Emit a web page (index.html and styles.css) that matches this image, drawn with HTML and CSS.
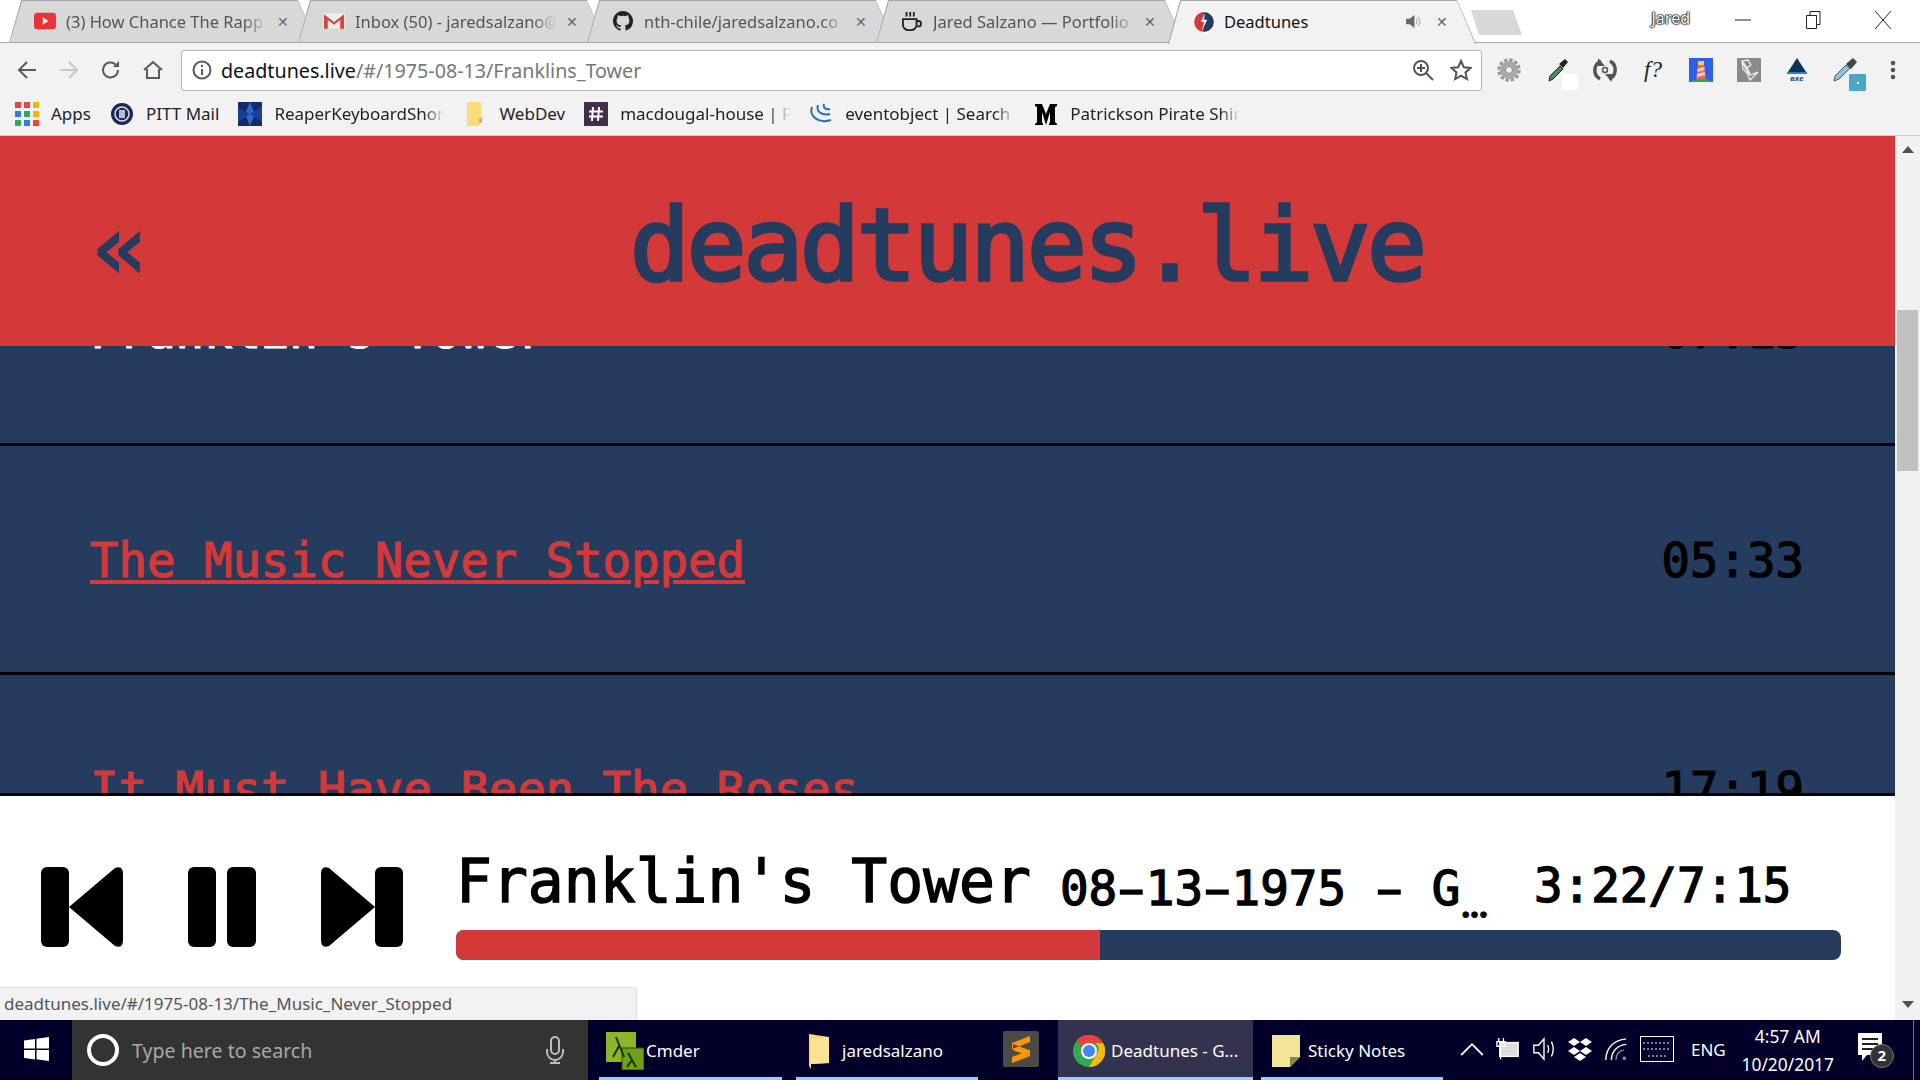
FILE: index.html
```html
<!DOCTYPE html>
<html lang="en">

<head>
    <meta charset="UTF-8" />
    <title>Deadtunes</title>
    <link rel="stylesheet" href="styles.css">
</head>

<body>
    <!-- browser chrome -->
    <div class="tabstrip">
        <div class="tab">
            <svg class="favicon" viewBox="0 0 20 15"><rect width="20" height="15" rx="3" fill="#e8333a"/><path d="M8 4l5 3.500-5 3.500z" fill="#fff"/></svg>
            <span class="tab-title">(3) How Chance The Rapp</span>
            <span class="tab-close">✕</span>
        </div>
        <div class="tab">
            <svg class="favicon" viewBox="0 0 23 16"><rect width="23" height="16" fill="#eee"/><path d="M1 16V1l10.500 8L22 1v15h-4V7l-6.500 5L5 7v9z" fill="#d5473c"/></svg>
            <span class="tab-title">Inbox (50) - jaredsalzano@</span>
            <span class="tab-close">✕</span>
        </div>
        <div class="tab">
            <svg class="favicon" viewBox="0 0 16 16"><path fill="#222" d="M8 0C3.580 0 0 3.580 0 8c0 3.540 2.290 6.530 5.470 7.590.4.070.55-.17.55-.38v-1.340c-2.230.48-2.700-1.070-2.700-1.070-.36-.92-.89-1.170-.89-1.170-.73-.5.050-.49.050-.49.810.06 1.230.83 1.230.83.720 1.230 1.870.870 2.330.66.070-.52.280-.87.510-1.070-1.780-.2-3.640-.89-3.640-3.950 0-.87.310-1.590.820-2.150-.08-.2-.36-1.020.08-2.120 0 0 .67-.21 2.200.82a7.600 7.600 0 0 1 4 0c1.530-1.040 2.200-.82 2.200-.82.44 1.100.16 1.920.08 2.120.51.560.82 1.270.82 2.150 0 3.070-1.870 3.750-3.650 3.950.29.250.54.730.54 1.480v2.200c0 .21.150.46.55.38A8 8 0 0 0 16 8c0-4.420-3.580-8-8-8z"/></svg>
            <span class="tab-title">nth-chile/jaredsalzano.co</span>
            <span class="tab-close">✕</span>
        </div>
        <div class="tab">
            <svg class="favicon" viewBox="0 0 24 22" fill="none" stroke="#222" stroke-width="2"><path d="M2 9h15v6a6 6 0 0 1-6 6H8a6 6 0 0 1-6-6zM17 11h2a3 3 0 0 1 0 6h-2M6 1v5M10 1v5M14 1v5"/></svg>
            <span class="tab-title">Jared Salzano — Portfolio</span>
            <span class="tab-close">✕</span>
        </div>
        <div class="tab tab-active">
            <svg class="favicon favicon-round" viewBox="0 0 20 20"><circle cx="10" cy="10" r="10" fill="#fff"/><path d="M10 1a9 9 0 0 0 0 18z" fill="#d33939"/><path d="M10 1a9 9 0 0 1 0 18z" fill="#253c5f"/><path d="M11 2L7 10h3l-2 8 5-10h-3z" fill="#fff"/></svg>
            <span class="tab-title">Deadtunes</span>
            <svg class="tab-audio" viewBox="0 0 16 14"><path d="M0 4h4l5-4v14l-5-4H0z" fill="#666"/><path d="M11 4q2 3 0 6M13 2q4 5 0 10" fill="none" stroke="#999"/></svg>
            <span class="tab-close">✕</span>
        </div>
        <div class="new-tab"></div>
        <div class="window-controls">
            <span class="profile">Jared</span>
            <svg class="win-btn win-min" viewBox="0 0 16 16"><path d="M0 8h16" stroke="#222"/></svg>
            <svg class="win-btn win-max" viewBox="0 0 16 18" fill="none" stroke="#222"><path d="M.5 4.500h10v13H.5zM4 4V.5h10v13h-3"/></svg>
            <svg class="win-btn win-close" viewBox="0 0 16 18"><path d="M0 0l16 18M16 0L0 18" stroke="#222" fill="none"/></svg>
        </div>
    </div>

    <div class="toolbar">
        <svg class="nav-icon" viewBox="0 0 20 20" fill="none" stroke="#5a5a5a" stroke-width="2"><path d="M19 10H2M10 2l-8 8 8 8"/></svg>
        <svg class="nav-icon" viewBox="0 0 20 20" fill="none" stroke="#c9c9c9" stroke-width="2"><path d="M1 10h17M10 2l8 8-8 8"/></svg>
        <svg class="nav-icon" viewBox="0 0 20 20" fill="none" stroke="#5a5a5a" stroke-width="2"><path d="M17 10a7.500 7.500 0 1 1-2.500-5.600"/><path d="M18 1v6h-6z" fill="#5a5a5a" stroke="none"/></svg>
        <svg class="nav-icon" viewBox="0 0 20 20" fill="none" stroke="#5a5a5a" stroke-width="2"><path d="M1 10l9-8 9 8M4 9v9h12V9"/></svg>
        <div class="omnibox">
            <svg class="omni-info" viewBox="0 0 20 20" fill="none" stroke="#5a5a5a" stroke-width="2"><circle cx="10" cy="10" r="8.500"/><path d="M10 9v6M10 5v2"/></svg>
            <span class="url"><b>deadtunes.live</b>/#/1975-08-13/Franklins_Tower</span>
            <svg class="omni-icon" viewBox="0 0 22 22" fill="none" stroke="#555" stroke-width="2"><circle cx="9" cy="9" r="7"/><path d="M14 14l7 7M9 5v8M5 9h8"/></svg>
            <svg class="omni-icon" viewBox="0 0 22 22" fill="none" stroke="#555" stroke-width="2"><path d="M11 2l2.800 6.200 6.700.7-5 4.500 1.400 6.600L11 16.600 5.100 20l1.400-6.600-5-4.500 6.700-.7z"/></svg>
        </div>
        <div class="extensions">
            <svg class="ext" viewBox="0 0 24 24" fill="none"><circle cx="12" cy="12" r="10" stroke="#9a9a9a" stroke-width="3.500" stroke-dasharray="3.400 1.830"/><circle cx="12" cy="12" r="6.500" stroke="#a8a8a8" stroke-width="5"/><circle cx="12" cy="12" r="3.500" stroke="#777" stroke-width="1"/></svg>
            <svg class="ext" viewBox="0 0 24 24"><path d="M4 23l1-5L15 8l3 3L8 21z" fill="#4f8a63" stroke="#222"/><path d="M14 6l6-5 3 3-5 6z" fill="#222"/><rect x="17" y="16" width="16" height="16" fill="#fff"/></svg>
            <svg class="ext" viewBox="0 0 24 24" fill="none" stroke="#555" stroke-width="3.500"><path d="M8 3a10 10 0 0 0-1 18M16 21a10 10 0 0 0 1-18"/><path d="M5 0v8h7zM19 24v-8h-7z" fill="#555" stroke="none"/><circle cx="12" cy="12" r="2.500" stroke-width="1.500"/></svg>
            <span class="ext ext-font">f?</span>
            <svg class="ext" viewBox="0 0 24 24"><rect width="24" height="24" fill="#2f5fe8"/><path d="M9 7h6l2 15H7z" fill="#ec6a55"/><path d="M8.500 11l7-2v3l-7 2zM8 16l8-2v3l-8 2z" fill="#f3c9c0"/><rect x="9" y="3" width="6" height="4" fill="#ffce3d"/><path d="M0 24q12-7 24 0z" fill="#1fae55"/></svg>
            <svg class="ext" viewBox="0 0 24 24"><rect width="24" height="24" fill="#8a8a8a"/><path d="M5 3l6-1 3 5-4 3zM5 3l1 8 4 4 3 7 8-8-8 3-3-4zM10 10l3 5" fill="none" stroke="#eee" stroke-width="1.300"/></svg>
            <svg class="ext" viewBox="0 0 24 24"><path d="M12 0l9 14H3z" fill="#10305c"/><rect x="2" y="14" width="20" height="2" fill="#1f86d0"/><text class="axe-label" x="12" y="23" text-anchor="middle">axe</text></svg>
            <svg class="ext" viewBox="0 0 24 24"><path d="M1 23l1-5L13 7l4 3L6 21z" fill="#8fc3df" stroke="#555"/><path d="M13 6l7-6 4 4-6 7z" fill="#444"/><rect x="16" y="16" width="17" height="17" rx="1" fill="#4ea4cb"/><rect x="24" y="24" width="2" height="2" fill="#fff"/></svg>
            <svg class="ext" viewBox="0 0 24 24" fill="#555"><circle cx="12" cy="5" r="2.300"/><circle cx="12" cy="12" r="2.300"/><circle cx="12" cy="19" r="2.300"/></svg>
        </div>
    </div>

    <div class="bookmarks">
        <div class="bookmark">
            <svg class="bm-icon" viewBox="0 0 20 20"><rect width="5" height="5" fill="#e8453c"/><rect x="7.500" width="5" height="5" fill="#e8453c"/><rect x="15" width="5" height="5" fill="#f4b400"/><rect y="7.500" width="5" height="5" fill="#3b78e7"/><rect x="7.500" y="7.500" width="5" height="5" fill="#34a853"/><rect x="15" y="7.500" width="5" height="5" fill="#f4b400"/><rect y="15" width="5" height="5" fill="#34a853"/><rect x="7.500" y="15" width="5" height="5" fill="#3b78e7"/><rect x="15" y="15" width="5" height="5" fill="#e8453c"/></svg>
            <span>Apps</span>
        </div>
        <div class="bookmark">
            <svg class="bm-icon" viewBox="0 0 24 24"><circle cx="12" cy="12" r="11" fill="#1c2a57"/><circle cx="12" cy="12" r="7" fill="none" stroke="#dde" stroke-width="1.500"/><rect x="9" y="8" width="6" height="8" fill="#b9bdd0"/></svg>
            <span>PITT Mail</span>
        </div>
        <div class="bookmark">
            <svg class="bm-icon" viewBox="0 0 24 24"><rect width="24" height="24" fill="#142a6b"/><path d="M12 0l5 12-5 12-5-12z" fill="#2f66c9"/><path d="M0 6l12 6L0 20zM24 4L12 12l12 8z" fill="#1b3f92"/></svg>
            <span class="bm-fade">ReaperKeyboardShor</span>
        </div>
        <div class="bookmark">
            <svg class="bm-icon" viewBox="0 0 24 24"><path d="M4 0h14v20l-2 4H4z" fill="#fbdc7a"/><path d="M16 21h3v-5h-3z" fill="#dcb44e"/></svg>
            <span>WebDev</span>
        </div>
        <div class="bookmark">
            <svg class="bm-icon" viewBox="0 0 24 24"><rect width="24" height="24" fill="#422e48"/><path d="M9 5L8 19M15 5l-1 14M5 9.500h14M5 14.500h14" stroke="#fff" stroke-width="2"/></svg>
            <span class="bm-fade">macdougal-house | F</span>
        </div>
        <div class="bookmark">
            <svg class="bm-icon" viewBox="0 0 24 24" fill="none" stroke="#2a6fb8" stroke-width="2"><path d="M3 5c-3 9 6 17 19 13M9 3c-2 6 3 11 12 9M15 2c-1 3 1 6 6 5"/></svg>
            <span class="bm-fade">eventobject | Search</span>
        </div>
        <div class="bookmark">
            <svg class="bm-icon" viewBox="0 0 24 24"><path d="M1 2h7l4 10 4-10h7v2l-2 1v15l2 2v1h-8v-1l1-2V10l-4 13-4-13v10l1 2v1H1v-1l2-2V5L1 4z" fill="#000"/></svg>
            <span class="bm-fade">Patrickson Pirate Shir</span>
        </div>
    </div>

    <!-- the app itself -->
    <div class="viewport">
        <div class="app">
            <header class="app-header">
                <a class="back" href="#">«</a>
                <h1>deadtunes.live</h1>
            </header>

            <div class="track-list">
                <div class="tracks">
                    <div class="track">
                        <a class="track-name track-current" href="#">Franklin's Tower</a>
                        <span class="track-time">07:15</span>
                    </div>
                    <div class="track">
                        <a class="track-name track-hover" href="#">The Music Never Stopped</a>
                        <span class="track-time">05:33</span>
                    </div>
                    <div class="track">
                        <a class="track-name" href="#">It Must Have Been The Roses</a>
                        <span class="track-time">17:19</span>
                    </div>
                </div>
            </div>

            <footer class="player">
                <div class="controls">
                    <svg class="ctl ctl-skip" viewBox="0 0 82 80"><rect width="28" height="80" rx="6"/><path d="M28 40L74 1q8-3 8 6v66q0 9-8 6z"/></svg>
                    <svg class="ctl ctl-pause" viewBox="0 0 68 80"><rect width="28" height="80" rx="6"/><rect x="39" width="29" height="80" rx="6"/></svg>
                    <svg class="ctl ctl-skip" viewBox="0 0 82 80"><rect x="54" width="28" height="80" rx="6"/><path d="M54 40L8 1q-8-3-8 6v66q0 9 8 6z"/></svg>
                </div>
                <div class="now-playing">
                    <div class="now-text">
                        <span class="now-title">Franklin's Tower</span>
                        <span class="now-show">08<i class="dash">-</i>13<i class="dash">-</i>1975 <i class="dash">-</i> G<span class="dots">...</span></span>
                        <span class="now-time">3:22/7:15</span>
                    </div>
                    <div class="progress">
                        <div class="progress-fill" style="width: 46.500%"></div>
                    </div>
                </div>
            </footer>

            <div class="status-bubble">deadtunes.live/#/1975-08-13/The_Music_Never_Stopped</div>
        </div>
        <div class="scrollbar">
            <span class="scroll-arrow scroll-up"></span>
            <span class="scroll-thumb"></span>
            <span class="scroll-arrow scroll-down"></span>
        </div>
    </div>

    <!-- windows taskbar -->
    <div class="taskbar">
        <div class="start">
            <svg class="start-logo" viewBox="0 0 25 24" fill="#fff"><path d="M0 3.500l11-1.500v9.500H0zM12.500 1.800L25 0v11.500H12.500zM0 13h11v9.500L0 21zM12.500 13H25v11l-12.500-1.800z"/></svg>
        </div>
        <div class="search">
            <svg class="cortana" viewBox="0 0 34 34" fill="none"><circle cx="17" cy="17" r="14" stroke="#fff" stroke-width="4"/></svg>
            <span class="search-text">Type here to search</span>
            <svg class="mic" viewBox="0 0 18 28" fill="none" stroke="#bbb" stroke-width="2"><rect x="5" y="1" width="8" height="17" rx="4"/><path d="M1 13v3a8 8 0 0 0 16 0v-3M9 24v3M4 27h10"/></svg>
        </div>
        <div class="task task-cmder">
            <svg class="task-icon" viewBox="0 0 38 38"><rect width="30" height="30" fill="#8db52a"/><rect x="16" y="16" width="22" height="22" fill="#6fa01a" stroke="#2c4a10"/><path d="M10 5l8 20M13 14l-6 11M22 21l8 14M26 28l-5 7" stroke="#1d3208" stroke-width="2" fill="none"/></svg>
            <span>Cmder</span>
        </div>
        <div class="task task-files">
            <svg class="task-icon task-folder" viewBox="0 0 22 36"><path d="M1 1l20 3v26L3 31v5l-2-3z" fill="#f8d775"/><path d="M3 31l18-1V4L3 6z" fill="#fbe394"/></svg>
            <span>jaredsalzano</span>
        </div>
        <div class="task-plain">
            <svg class="task-icon" viewBox="0 0 36 36"><rect width="36" height="36" rx="2" fill="#4a4a48"/><path d="M27 5L9 12v6l18-7zM10 13l16 6v6L10 19zM27 19v6L9 32v-6z" fill="#ff9800"/></svg>
        </div>
        <div class="task task-chrome">
            <svg class="task-icon" viewBox="0 0 32 32"><circle cx="16" cy="16" r="16" fill="#34a853"/><path d="M16 0a16 16 0 0 1 14 8H16a8 8 0 0 0-7 4L4 5a16 16 0 0 1 12-5z" fill="#ea4335"/><path d="M30 8a16 16 0 0 1-14 24l7-12a8 8 0 0 0 0-12z" fill="#fbbc05"/><circle cx="16" cy="16" r="8" fill="#fff"/><circle cx="16" cy="16" r="6" fill="#4285f4"/></svg>
            <span>Deadtunes - G...</span>
        </div>
        <div class="task task-sticky">
            <svg class="task-icon" viewBox="0 0 28 32"><path d="M0 0h28v22L18 32H0z" fill="#f3e597"/><path d="M18 32V22h10z" fill="#8a8356"/></svg>
            <span>Sticky Notes</span>
        </div>
        <div class="tray">
            <svg class="tray-icon" viewBox="0 0 20 12" fill="none" stroke="#fff" stroke-width="1.500"><path d="M1 11l9-9 9 9"/></svg>
            <svg class="tray-icon" viewBox="0 0 26 26" fill="none" stroke="#fff" stroke-width="1.500"><rect x="4" y="6" width="20" height="15" fill="#ddd"/><path d="M3 1v4M8 1v4M1 5h9v5H1zM5 10v14"/></svg>
            <svg class="tray-icon" viewBox="0 0 24 26" fill="none" stroke="#fff" stroke-width="1.500"><path d="M1 9h5l6-7v22l-6-7H1zM16 9q2 4 0 8M20 5q4 8 0 16"/></svg>
            <svg class="tray-icon" viewBox="0 0 24 24" fill="#fff"><path d="M6 1l6 4-6 4-6-4zM18 1l6 4-6 4-6-4zM6 10l6 4-6 4-6-4zM18 10l6 4-6 4-6-4zM12 16l6 4-6 4-6-4z"/></svg>
            <svg class="tray-icon" viewBox="0 0 26 26" fill="none" stroke="#fff" stroke-width="1.500"><path d="M2 25C2 12 11 3 24 2M8 25C8 16 14 9 24 8"/><path d="M13 25c0-6 3-10 9-11" stroke="#889"/><circle cx="22" cy="23" r="2" fill="#889" stroke="none"/></svg>
            <svg class="tray-icon tray-kbd" viewBox="0 0 34 26" fill="none" stroke="#fff"><rect x=".5" y=".5" width="33" height="25"/><path d="M3 7h28M3 13h28M8 20h18" stroke-dasharray="2 2"/></svg>
            <span class="tray-lang">ENG</span>
            <div class="clock">
                <span>4:57 AM</span>
                <span>10/20/2017</span>
            </div>
            <div class="notify">
                <svg class="notify-icon" viewBox="0 0 24 30"><path d="M0 0h24v22H9l-5 6v-6H0z" fill="#fff"/><path d="M4 6h16M4 11h16M4 16h12" stroke="#222" stroke-width="2"/></svg>
                <span class="notify-badge">2</span>
            </div>
        </div>
        <div class="show-desktop"></div>
    </div>
</body>

</html>
```

FILE: styles.css
```css
* {
    box-sizing: border-box;
}

body {
    margin: 0;
    width: 1920px;
    height: 1080px;
    overflow: hidden;
    display: flex;
    flex-direction: column;
    font-family: "Noto Sans", sans-serif;
    background-color: #f2f2f2;
}

/* tabs */
.tabstrip {
    height: 43px;
    display: flex;
    padding-left: 9px;
    background-color: #fff;
    border-bottom: 1px solid #aaa;
}

.tab {
    position: relative;
    width: 308px;
    height: 43px;
    margin-right: -19px;
    padding: 0 23px 1px 25px;
    display: flex;
    align-items: center;
    font-size: 16.500px;
    color: #555;
    background-color: #a8a8a8;
    clip-path: polygon(0 100%, 12px 0, 289px 0, 308px 100%);
}

.tab::before {
    content: "";
    position: absolute;
    inset: 1px 1px 1px 1px;
    background-color: #d8d8d8;
    clip-path: polygon(0 100%, 12px 0, 288px 0, 306px 100%);
}

.tab > * {
    position: relative;
}

.tab-active {
    z-index: 2;
    color: #111;
    margin-left: 3px;
    height: 44px;
}

.tab-active::before {
    background-color: #f2f2f2;
    bottom: 0;
}

.favicon {
    width: 22px;
    height: 20px;
    flex: none;
    margin-right: 10px;
}

.favicon-round {
    height: 24px;
    margin-right: 9px;
}

.tab-title {
    flex: 1;
    white-space: nowrap;
    overflow: hidden;
    -webkit-mask-image: linear-gradient(to right, #000 88%, transparent);
    mask-image: linear-gradient(to right, #000 88%, transparent);
}

.tab-active .tab-title {
    -webkit-mask-image: none;
    mask-image: none;
}

.tab-audio {
    width: 15px;
    height: 13px;
    margin-right: 6px;
}

.tab-close {
    width: 22px;
    margin-left: 4px;
    text-align: center;
    font-size: 14px;
    color: #666;
}

.new-tab {
    width: 51px;
    height: 25px;
    margin: 10px 0 0 14px;
    background-color: #d8d8d8;
    clip-path: polygon(0 0, 42px 0, 51px 100%, 8px 100%);
}

.window-controls {
    margin-left: auto;
    display: flex;
    align-items: center;
    padding-bottom: 3px;
}

.profile {
    font-size: 16px;
    color: #fff;
    text-shadow: 0 0 2px #000, 0 0 2px #000, 0 0 1px #000, 0 0 1px #000;
    margin: 0 45px 4px 0;
}

.win-btn {
    width: 16px;
    height: 18px;
}

.win-min {
    margin-right: 55px;
}

.win-max {
    margin-right: 53px;
}

.win-close {
    margin-right: 29px;
}

/* toolbar */
.toolbar {
    height: 52px;
    display: flex;
    align-items: center;
    padding-left: 17px;
    padding-top: 2px;
}

.nav-icon {
    width: 20px;
    height: 20px;
    margin-right: 22px;
}

.omnibox {
    width: 1301px;
    height: 41px;
    margin-left: -4px;
    display: flex;
    align-items: center;
    padding: 0 9px 0 10px;
    background-color: #fff;
    border: 1px solid #b4b4b4;
    border-radius: 3px;
}

.omni-info {
    width: 20px;
    height: 20px;
    margin-right: 9px;
}

.url {
    flex: 1;
    font-size: 19.700px;
    color: #777;
}

.url b {
    font-weight: normal;
    color: #111;
}

.omni-icon {
    width: 22px;
    height: 22px;
    margin-left: 16px;
}

.extensions {
    display: flex;
    align-items: center;
    margin-left: 15px;
    gap: 24px;
}

.ext {
    width: 24px;
    height: 24px;
    flex: none;
    overflow: visible;
}

.ext-font {
    font-family: "Liberation Serif", serif;
    font-style: italic;
    font-size: 23px;
    line-height: 24px;
    text-align: center;
    color: #222;
}

.axe-label {
    font-family: "Liberation Sans", sans-serif;
    font-size: 8px;
    font-weight: bold;
    fill: #1c3d6e;
}

/* bookmarks */
.bookmarks {
    height: 41px;
    display: flex;
    align-items: center;
    gap: 19px;
    padding: 0 0 3px 15px;
    font-size: 17px;
    color: #222;
    border-bottom: 1px solid #ccc;
}

.bookmark {
    display: flex;
    align-items: center;
    gap: 12px;
    white-space: nowrap;
}

.bm-icon {
    width: 24px;
    height: 24px;
    flex: none;
}

.bm-fade {
    width: 170px;
    overflow: hidden;
    -webkit-mask-image: linear-gradient(to right, #000 88%, transparent);
    mask-image: linear-gradient(to right, #000 88%, transparent);
}

/* page */
.viewport {
    height: 884px;
    display: flex;
}

.app {
    position: relative;
    width: 1895px;
    display: flex;
    flex-direction: column;
    font-family: "DejaVu Sans Mono", monospace;
    background-color: #fff;
}

.app-header {
    height: 210px;
    flex: none;
    display: flex;
    align-items: center;
    background-color: #d33939;
    color: #253c5f;
    position: relative;
    z-index: 1;
}

.back {
    width: 630px;
    margin-top: 14px;
    padding-left: 92px;
    font-size: 94px;
    font-weight: bold;
    line-height: 1;
    color: #253c5f;
    text-decoration: none;
}

h1 {
    margin: 8px 0 0;
    font-size: 99px;
    font-weight: normal;
    letter-spacing: -2.900px;
    -webkit-text-stroke: 3.500px;
    white-space: nowrap;
}

.track-list {
    flex: 1;
    overflow: hidden;
    background-color: #253c5f;
}

.tracks {
    margin-top: -129px;
}

.track {
    height: 229px;
    padding: 2px 91px 0 90px;
    display: flex;
    align-items: center;
    justify-content: space-between;
    font-size: 47.300px;
    -webkit-text-stroke: 1.200px;
    border-bottom: 3px solid #000;
}

.track-name {
    color: #d33939;
    text-decoration: none;
}

.track-current {
    color: #fff;
}

.track-hover {
    text-decoration: underline;
}

.track-time {
    color: #000;
}

.player {
    height: 227px;
    flex: none;
    display: flex;
    padding: 71px 0 0 41px;
    background-color: #fff;
    border-top: 3px solid #000;
}

.controls {
    display: flex;
    gap: 65px;
    width: 415px;
}

.ctl {
    height: 80px;
    flex: none;
}

.ctl-skip {
    width: 82px;
}

.ctl-pause {
    width: 68px;
}

.now-playing {
    width: 1385px;
    margin-top: -20px;
}

.now-text {
    display: flex;
    align-items: baseline;
    height: 60px;
    color: #000;
    -webkit-text-stroke: 1.400px;
}

.now-title {
    font-size: 59.700px;
    white-space: nowrap;
}

.now-show {
    width: 474px;
    margin-left: 29px;
    font-size: 47.500px;
    white-space: nowrap;
    transform: translateY(3px);
}

.dash {
    display: inline-block;
    font-style: normal;
    transform: scaleX(1.700);
}

.dots {
    font-family: "Lato", sans-serif;
    font-size: 44px;
    font-weight: bold;
    letter-spacing: -1.500px;
    -webkit-text-stroke: 0;
    vertical-align: -13px;
    line-height: 0;
}

.now-time {
    font-size: 47.500px;
}

.progress {
    height: 30px;
    margin-top: 23px;
    border-radius: 8px;
    overflow: hidden;
    background-color: #253c5f;
}

.progress-fill {
    height: 100%;
    background-color: #d33939;
}

.status-bubble {
    position: absolute;
    left: 0;
    bottom: 0;
    width: 637px;
    height: 33px;
    padding: 4px 4px;
    font-family: "Noto Sans", sans-serif;
    font-size: 17px;
    color: #555;
    background-color: #f2f2f2;
    border: 1px solid #dedede;
    border-width: 1px 1px 0 0;
    border-top-right-radius: 4px;
    z-index: 2;
}

.scrollbar {
    width: 25px;
    display: flex;
    flex-direction: column;
    align-items: center;
    padding: 10px 0;
    background-color: #f1f1f1;
}

.scroll-arrow {
    width: 0;
    height: 0;
    border-left: 6px solid transparent;
    border-right: 6px solid transparent;
}

.scroll-up {
    border-bottom: 7px solid #505050;
}

.scroll-down {
    margin-top: auto;
    margin-bottom: 2px;
    border-top: 7px solid #505050;
}

.scroll-thumb {
    width: 21px;
    height: 161px;
    margin-top: 157px;
    background-color: #c1c1c1;
}

/* taskbar */
.taskbar {
    height: 60px;
    flex: none;
    display: flex;
    align-items: stretch;
    font-size: 17px;
    color: #fff;
    background-color: #000028;
}

.start {
    width: 72px;
    display: flex;
    align-items: center;
    justify-content: center;
    padding-bottom: 3px;
}

.start-logo {
    width: 25px;
    height: 24px;
}

.search {
    width: 516px;
    display: flex;
    align-items: center;
    padding: 0 24px 0 14px;
    background-color: #333;
}

.cortana {
    width: 34px;
    height: 34px;
}

.search-text {
    flex: 1;
    margin-left: 12px;
    font-size: 19.600px;
    color: #a8a8a8;
}

.mic {
    width: 18px;
    height: 28px;
}

.task {
    display: flex;
    align-items: center;
    padding-top: 4px;
    border-bottom: 3px solid #99ccff;
}

.task-icon {
    flex: none;
}

.task-cmder {
    width: 183px;
    margin-left: 11px;
    padding-left: 7px;
}

.task-cmder .task-icon {
    width: 38px;
    height: 38px;
    margin-right: 2px;
}

.task-files {
    width: 182px;
    margin-left: 14px;
    padding-left: 12px;
}

.task-folder {
    width: 22px;
    height: 36px;
    margin-right: 12px;
}

.task-plain {
    width: 80px;
    display: flex;
    align-items: center;
    padding: 0 0 3px 25px;
}

.task-plain .task-icon {
    width: 36px;
    height: 36px;
}

.task-chrome {
    width: 195px;
    padding-left: 15px;
    background-color: #333350;
}

.task-chrome .task-icon {
    width: 32px;
    height: 32px;
    margin-right: 6px;
}

.task-sticky {
    width: 182px;
    margin-left: 8px;
    padding-left: 11px;
}

.task-sticky .task-icon {
    width: 28px;
    height: 32px;
    margin-right: 8px;
}

.tray {
    flex: 1;
    display: flex;
    align-items: center;
    padding: 0 0 2px 17px;
}

.tray-icon {
    width: 24px;
    height: 24px;
    margin-right: 12px;
}

.tray-kbd {
    width: 34px;
    height: 26px;
    margin-right: 17px;
}

.tray-lang {
    margin-right: 12px;
}

.clock {
    width: 100px;
    display: flex;
    flex-direction: column;
    align-items: center;
    line-height: 28px;
    font-size: 17.400px;
    padding-top: 2px;
}

.notify {
    position: relative;
    margin-left: 20px;
    width: 30px;
    height: 32px;
}

.notify-icon {
    width: 24px;
    height: 30px;
}

.notify-badge {
    position: absolute;
    left: 12px;
    top: 11px;
    width: 24px;
    height: 24px;
    border-radius: 50%;
    background-color: #333;
    border: 1px solid #777;
    text-align: center;
    font-size: 15px;
    line-height: 21px;
    font-weight: bold;
}

.show-desktop {
    width: 7px;
    border-left: 1px solid #777;
}
```
